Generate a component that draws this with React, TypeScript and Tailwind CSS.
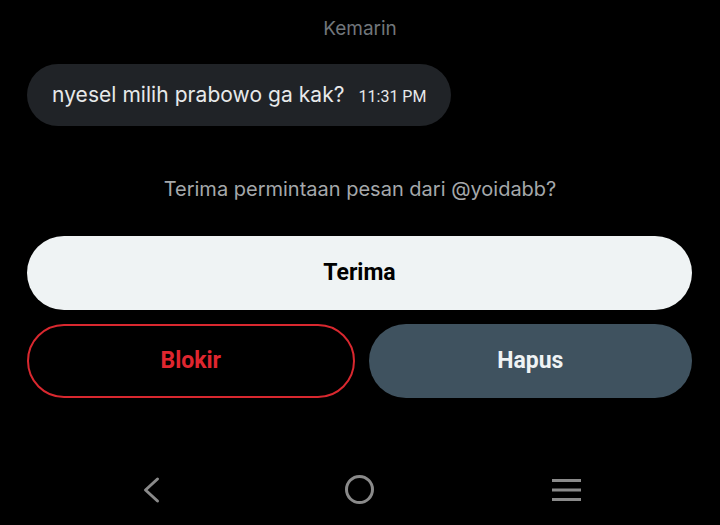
// tombol pill
const PillButton = ({
  children,
  className,
}: {
  children: React.ReactNode;
  className: string;
}) => (
  <button
    className={`h-[74px] rounded-full flex items-center justify-center text-[23px] font-bold font-['Roboto',sans-serif] ${className}`}
  >
    {children}
  </button>
);

// ikon navigasi
const NavIcon = ({ children }: { children: React.ReactNode }) => (
  <svg
    width="40"
    height="40"
    viewBox="0 0 40 40"
    fill="none"
    stroke="#8a8a8a"
    strokeWidth="3"
    strokeLinecap="round"
    strokeLinejoin="round"
  >
    {children}
  </svg>
);

export default function App() {
  return (
    <div className="w-[720px] h-[525px] bg-black flex flex-col font-['Inter',sans-serif] overflow-hidden">
      <div className="pt-[16px] text-center text-[19px] text-[#71767b] leading-[26px]">
        Kemarin
      </div>

      <div className="px-[27px] pt-[22px]">
        <div className="inline-flex items-center h-[62px] rounded-full bg-[#202327] pl-[25px] pr-[25px]">
          <span className="text-[21px] text-[#e7e9ea] tracking-[0.05px]">
            nyesel milih prabowo ga kak?
          </span>
          <span className="ml-[14px] mt-[4px] text-[16px] text-[#e7e9ea] font-['Roboto',sans-serif]">
            11:31 PM
          </span>
        </div>
      </div>

      <div className="pt-[50px] text-center text-[20px] text-[#a5a8ab] leading-[26px]">
        Terima permintaan pesan dari @yoidabb?
      </div>

      <div className="pl-[27px] pr-[28px] pt-[34px] flex flex-col gap-[14px]">
        <PillButton className="w-full bg-[#eff3f4] text-black">Terima</PillButton>
        <div className="flex gap-[14px]">
          <PillButton className="flex-1 border-[2px] border-[#d9282f] text-[#e0262f]">
            Blokir
          </PillButton>
          <PillButton className="flex-1 bg-[#3f525f] text-[#eff3f4]">Hapus</PillButton>
        </div>
      </div>

      <div className="mt-auto h-[70px] flex items-center pl-[131px]">
        <NavIcon>
          <polyline points="26.5,9 14.5,20 26.5,31" />
        </NavIcon>
        <div className="w-[169px]" />
        <NavIcon>
          <circle cx="19.5" cy="19.5" r="13" />
        </NavIcon>
        <div className="w-[165px]" />
        <NavIcon>
          <g strokeLinecap="butt">
            <line x1="7" y1="10.5" x2="36" y2="10.5" />
            <line x1="7" y1="20" x2="36" y2="20" />
            <line x1="7" y1="29.5" x2="36" y2="29.5" />
          </g>
        </NavIcon>
      </div>
    </div>
  );
}
